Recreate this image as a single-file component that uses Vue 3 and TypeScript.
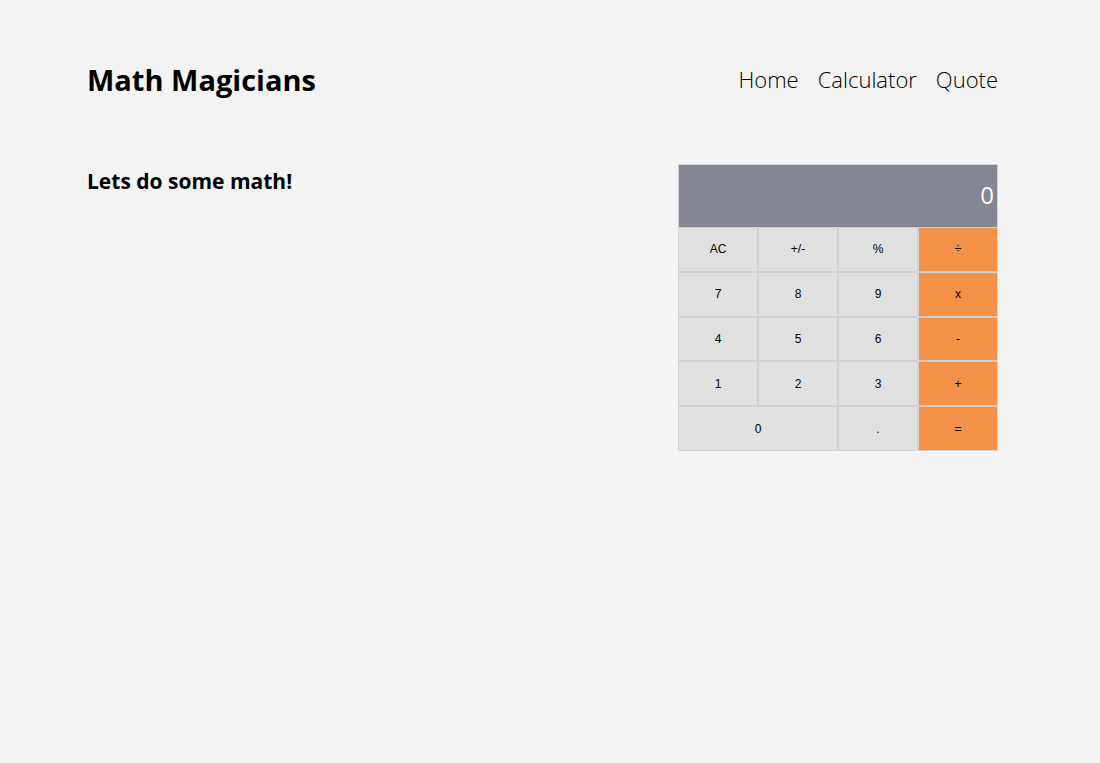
<script setup lang="ts">
import { ref } from 'vue'

type Key = { label: string; operator?: boolean; wide?: boolean }

const display = ref('0')
const links: string[] = ['Home', 'Calculator', 'Quote']
const keys: Key[] = [
  { label: 'AC' }, { label: '+/-' }, { label: '%' }, { label: '÷', operator: true },
  { label: '7' }, { label: '8' }, { label: '9' }, { label: 'x', operator: true },
  { label: '4' }, { label: '5' }, { label: '6' }, { label: '-', operator: true },
  { label: '1' }, { label: '2' }, { label: '3' }, { label: '+', operator: true },
  { label: '0', wide: true }, { label: '.' }, { label: '=', operator: true },
]

function press(label: string) {
  if (label === 'AC') display.value = '0'
  else if (/^\d$/.test(label)) display.value = display.value === '0' ? label : display.value + label
  else if (label === '.' && !display.value.includes('.')) display.value += '.'
}
</script>

<template>
  <div class="page">
    <header class="header">
      <h1>Math Magicians</h1>
      <nav>
        <a v-for="link in links" :key="link" href="#">{{ link }}</a>
      </nav>
    </header>
    <main class="main">
      <h2>Lets do some math!</h2>
      <section class="calculator" aria-label="Calculator">
        <output class="display">{{ display }}</output>
        <div class="keys">
          <button
            v-for="key in keys"
            :key="key.label"
            type="button"
            :class="{ operator: key.operator, wide: key.wide }"
            @click="press(key.label)"
          >{{ key.label }}</button>
        </div>
      </section>
    </main>
  </div>
</template>

<style>
body {
  margin: 0;
  background: #f3f3f3;
}
</style>

<style scoped>
.page {
  padding: 56px 102px 56px 87px;
  font-family: "Segoe UI", "Open Sans", "Noto Sans", sans-serif;
  color: #000;
}
.header {
  display: flex;
  justify-content: space-between;
  align-items: center;
  height: 46px;
}
h1 {
  margin: 0;
  font-size: 29px;
  font-weight: 700;
}
nav {
  display: flex;
  gap: 19px;
}
nav a {
  color: #000;
  font-size: 22px;
  font-weight: 300;
  text-decoration: none;
}
.main {
  display: flex;
  justify-content: space-between;
  align-items: flex-start;
  margin-top: 62px;
}
h2 {
  margin: 0;
  font-size: 21px;
  font-weight: 700;
  line-height: 34px;
}
.calculator {
  width: 320px;
  border: 1px solid #d3d3d3;
  box-sizing: border-box;
}
.display {
  display: block;
  padding: 0 3px 2px;
  background: #858693;
  color: #fff;
  font-size: 24px;
  line-height: 60px;
  text-align: right;
}
.keys {
  display: grid;
  grid-template-columns: repeat(4, 1fr);
  grid-template-rows: repeat(5, 1fr);
  gap: 2px;
  height: 223px;
  padding-top: 1px;
  box-sizing: border-box;
  background: #d0d0d0;
}
button {
  padding: 0;
  border: 0;
  background: #e0e0e0;
  color: #000;
  font-family: "Liberation Sans", Arial, sans-serif;
  font-size: 12px;
}
.operator {
  background: #f39149;
}
.wide {
  grid-column: span 2;
}
</style>
